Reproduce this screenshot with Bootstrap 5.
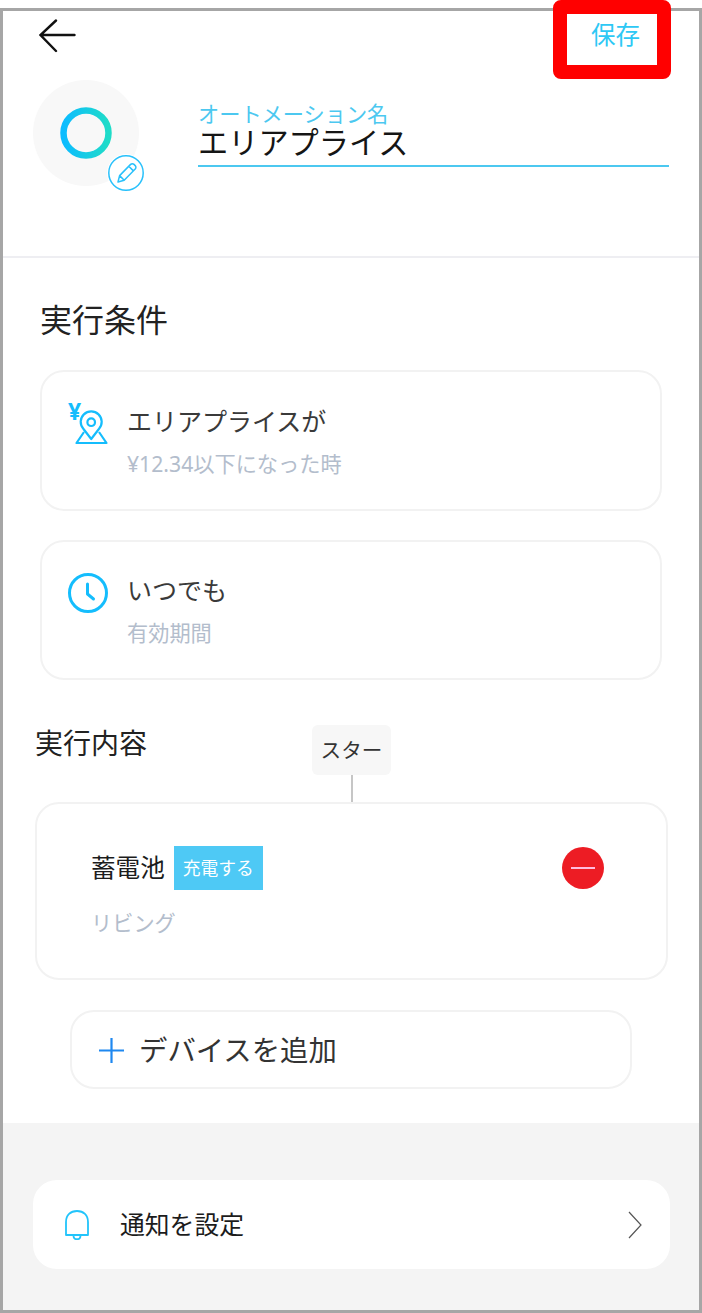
<!DOCTYPE html>
<html lang="ja">
<head>
  <meta charset="UTF-8">
  <meta name="viewport" content="width=device-width, initial-scale=1.0">
  <title>オートメーション</title>
  <link href="https://cdn.jsdelivr.net/npm/bootstrap@5.3.0/dist/css/bootstrap.min.css" rel="stylesheet">
  <style>
    html, body { height: 1313px; overflow: hidden; }
    body {
      background: #fff;
      font-family: "Noto Sans", "Noto Sans CJK JP", sans-serif;
      color: #333;
    }
    .phone-frame {
      margin-top: 8px;
      height: 1305px;
      border: 3px solid #a6a6a6;
    }
    .head-block { height: 247px; border-bottom: 2px solid #eeeef2; }
    .top-bar { height: 69px; padding: 8px 59px 0 36px; }
    .save-text { font-size: 24.5px; line-height: 32px; color: #2dc8f5; }
    .callout-box {
      top: 0; left: 553px; width: 118px; height: 79px;
      border: 14px solid #ff0000;
      border-radius: 8px;
    }
    .name-row { padding-left: 30px; }
    .avatar-wrap { width: 106px; height: 106px; background: #f8f8f8; flex: none; }
    .edit-badge { right: -6px; bottom: -6px; width: 38px; height: 38px; background: #fff; }
    .name-field { width: 471px; margin-left: 59px; margin-top: 23px; border-bottom: 2px solid #4cc8f0; height: 64px; }
    .name-label { font-size: 21.2px; line-height: 21px; color: #4cc8f0; }
    .name-value { font-size: 30.2px; line-height: 38px; color: #151515; }
    .sec-title { font-size: 32px; line-height: 44px; margin: 40px 0 0 37px; color: #222; }
    .plain-card { border: 2px solid #f2f2f2; border-radius: 24px; background: #fff; }
    .cond-card { width: 622px; height: 141px; margin-left: 37px; padding: 31px 0 0 26px; }
    .cond-top { margin-top: 28px; }
    .cond-card + .cond-card { margin-top: 29px; height: 140px; padding-top: 30px; }
    .cond-icon { width: 42px; height: 42px; flex: none; margin: 1px 17px 0 0; overflow: visible; }
    .item-title { font-size: 25px; line-height: 36px; color: #3a3a3a; }
    .item-sub { font-size: 21.2px; line-height: 30px; margin-top: 10px; color: #b3bdcc; }
    .run-head { display: grid; grid-template-columns: 1fr auto 1fr; width: 633px; margin: 45px 0 0 32px; }
    .run-title { font-size: 28px; line-height: 36px; color: #222; }
    .star-tag { width: 79px; height: 50px; background: #f7f7f7; border-radius: 6px; font-size: 20.6px; color: #333; }
    .star-line { width: 2px; height: 27px; background: #c6c6c6; }
    .device-card { width: 633px; height: 178px; margin-left: 32px; padding: 42px 0 0 54px; }
    .device-name { font-size: 24.6px; color: #1c1c1c; }
    .action-tag { width: 89px; height: 44px; margin-left: 9px; background: #4ec9f5; color: #fff; font-size: 17.8px; }
    .minus-btn { width: 42px; height: 42px; margin: 0 62px 0 auto; background: #ed1c24; }
    .minus-btn span { width: 24px; height: 2px; background: #fbd; }
    .device-sub { margin-top: 18px; }
    .add-card { width: 562px; height: 79px; margin: 30px 0 0 67px; padding: 2px 0 0 27px; }
    .add-text { font-size: 28.4px; margin-left: 15px; color: #333; }
    .foot-block { margin-top: 34px; height: 187px; background: #f4f4f4; padding: 57px 0 0 30px; }
    .notify-card { width: 637px; height: 89px; background: #fff; border-radius: 24px; padding: 0 28px 0 32px; }
    .notify-text { font-size: 24.8px; margin-left: 31px; color: #1c1c1c; }
  </style>
</head>
<body class="position-relative">
  <div class="phone-frame d-flex flex-column">
    <div class="head-block">
      <div class="top-bar d-flex justify-content-between align-items-start">
        <svg width="37" height="34" viewBox="0 0 37 34" fill="none" stroke="#111" stroke-width="2.4" stroke-linecap="round"><path d="M35.500 16H2M17 1.500 1.500 16 17 32"/></svg>
        <div class="save-text">保存</div>
      </div>
      <div class="name-row d-flex">
        <div class="avatar-wrap rounded-circle position-relative d-flex align-items-center justify-content-center">
          <svg width="52" height="52" viewBox="0 0 52 52" fill="none">
            <defs><linearGradient id="ringGrad" x1="0" y1="0" x2="1" y2="0"><stop offset="0" stop-color="#0cbcff"/><stop offset="1" stop-color="#1fdcc8"/></linearGradient></defs>
            <circle cx="26" cy="26" r="22.5" stroke="url(#ringGrad)" stroke-width="6.5"/>
          </svg>
          <div class="edit-badge position-absolute rounded-circle">
            <svg width="38" height="38" viewBox="0 0 38 38" fill="none" stroke="#29c1fb" stroke-width="1.5" stroke-linejoin="round"><circle cx="19" cy="19" r="17.2"/><path d="M11 28l1.600-6.400L23.600 10.400a2.400 2.400 0 0 1 3.400 0l1.200 1.200a2.400 2.400 0 0 1 0 3.400L17.200 26.200zM12.600 21.600l4.600 4.600M21.800 12.300l4.600 4.600"/></svg>
          </div>
        </div>
        <div class="name-field">
          <div class="name-label">オートメーション名</div>
          <div class="name-value">エリアプライス</div>
        </div>
      </div>
    </div>

    <div class="sec-title">実行条件</div>
    <div class="plain-card cond-card cond-top d-flex">
      <svg class="cond-icon" viewBox="0 0 42 42" fill="none" stroke="#14bdfd" stroke-width="2.200" stroke-linejoin="round">
        <text x="0" y="16" font-family="Noto Sans, sans-serif" font-size="23" font-weight="700" fill="#14bdfd" stroke="none">¥</text>
        <path d="M23.200 35 15.500 25a10.500 10.500 0 1 1 15.400 0z"/><circle cx="23.200" cy="18.200" r="3.800"/>
        <path d="M16 28 8.500 39h30L31 28"/>
      </svg>
      <div>
        <div class="item-title">エリアプライスが</div>
        <div class="item-sub">¥12.34以下になった時</div>
      </div>
    </div>
    <div class="plain-card cond-card d-flex">
      <svg class="cond-icon" viewBox="0 0 42 42" fill="none" stroke="#14bdfd" stroke-width="3" stroke-linecap="round" stroke-linejoin="round"><circle cx="20" cy="20" r="18.500"/><path d="M19.500 11v10l6 5"/></svg>
      <div>
        <div class="item-title">いつでも</div>
        <div class="item-sub">有効期間</div>
      </div>
    </div>

    <div class="run-head">
      <div class="run-title">実行内容</div>
      <div class="d-flex flex-column align-items-center">
        <div class="star-tag d-flex align-items-center justify-content-center">スター</div>
        <div class="star-line"></div>
      </div>
    </div>
    <div class="plain-card device-card">
      <div class="d-flex align-items-center">
        <div class="device-name">蓄電池</div>
        <div class="action-tag d-flex align-items-center justify-content-center">充電する</div>
        <div class="minus-btn rounded-circle d-flex align-items-center justify-content-center"><span></span></div>
      </div>
      <div class="item-sub device-sub">リビング</div>
    </div>
    <div class="plain-card add-card d-flex align-items-center">
      <svg width="25" height="25" viewBox="0 0 25 25" stroke="#1e88f0" stroke-width="2.200"><path d="M0 12.500h25M12.500 0v25"/></svg>
      <div class="add-text">デバイスを追加</div>
    </div>

    <div class="foot-block">
      <div class="notify-card d-flex align-items-center">
        <svg width="24" height="30" viewBox="0 0 24 30" fill="none" stroke="#22c4fb" stroke-width="1.800" stroke-linejoin="round"><path d="M1 25V12C1 5 5.500 1 12 1s11 4 11 11v13zM8.500 25.500c0 5 7 5 7 0"/></svg>
        <div class="notify-text">通知を設定</div>
        <svg class="ms-auto" width="14" height="28" viewBox="0 0 14 28" fill="none" stroke="#555" stroke-width="1.200"><path d="M1 1l12 13L1 27"/></svg>
      </div>
    </div>
  </div>
  <div class="callout-box position-absolute"></div>
  <script src="https://cdn.jsdelivr.net/npm/bootstrap@5.3.0/dist/js/bootstrap.bundle.min.js"></script>
</body>
</html>
